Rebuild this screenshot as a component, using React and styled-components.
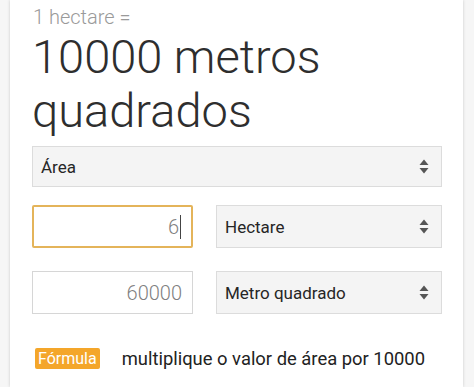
import styled, { createGlobalStyle } from "styled-components";

const Global = createGlobalStyle`
  html, body {
    margin: 0;
    background: #f6f6f6;
    font-family: Roboto, "Liberation Sans", Arial, sans-serif;
  }
`;

const Card = styled.div`
  margin: 0 11px 0 10px;
  min-height: 387px;
  box-sizing: border-box;
  background: #fff;
  box-shadow: 0 0 3px rgba(0, 0, 0, 0.18);
  padding: 5px 21px 0 22px;
`;

const Lead = styled.div`
  font-size: 20px;
  line-height: 24px;
  font-weight: 300;
  color: #9a9a9a;
  padding-left: 1px;
`;

const Result = styled.div`
  font-size: 47px;
  line-height: 54px;
  font-weight: 300;
  color: #2e2e2e;
  margin-top: 1px;
`;

const SelectBox = styled.div`
  display: flex;
  align-items: center;
  justify-content: space-between;
  box-sizing: border-box;
  height: ${(p) => p.h || 42}px;
  flex: ${(p) => (p.grow ? 1 : "none")};
  background: #f4f4f4;
  border: 1px solid #dcdcdc;
  padding: 0 12px 0 8px;
  font-size: 17px;
  color: #262626;
`;

const Arrows = () => (
  <svg width="10" height="15" viewBox="0 0 10 15">
    <path d="M5 0.5 L9.5 6 L0.5 6 Z" fill="#555" />
    <path d="M5 14.5 L9.5 9 L0.5 9 Z" fill="#555" />
  </svg>
);

const Row = styled.div`
  display: flex;
  gap: 23px;
  margin-top: ${(p) => p.top}px;
`;

const Field = styled.div`
  box-sizing: border-box;
  width: 161px;
  height: ${(p) => p.h}px;
  display: flex;
  align-items: center;
  justify-content: flex-end;
  padding-right: 10px;
  border: ${(p) => (p.focused ? "2px solid #e4b45a" : "1px solid #d6d6d6")};
  border-radius: ${(p) => (p.focused ? "2px" : "0")};
  font-size: 20px;
  font-weight: 300;
  color: #808080;
`;

const Caret = styled.span`
  display: inline-block;
  width: 1px;
  height: 24px;
  background: #444;
  margin-left: 1px;
`;

const FormulaRow = styled.div`
  display: flex;
  align-items: center;
  margin-top: 34px;
  padding-left: 3px;
`;

const Badge = styled.span`
  background: #f4a62a;
  color: #fff;
  font-size: 16px;
  line-height: 21px;
  padding: 0 3px;
  border-radius: 2px;
`;

const FormulaText = styled.span`
  margin-left: 22px;
  font-size: 18.4px;
  color: #222;
`;

export default function App() {
  return (
    <>
      <Global />
      <Card>
        <Lead>1 hectare =</Lead>
        <Result>
          10000 metros
          <br />
          quadrados
        </Result>
        <SelectBox h={41} style={{ marginTop: 8 }}>
          <span>Área</span>
          <Arrows />
        </SelectBox>
        <Row top={18}>
          <Field h={43} focused>
            6<Caret />
          </Field>
          <SelectBox h={43} grow>
            <span>Hectare</span>
            <Arrows />
          </SelectBox>
        </Row>
        <Row top={23}>
          <Field h={43}>60000</Field>
          <SelectBox h={43} grow>
            <span>Metro quadrado</span>
            <Arrows />
          </SelectBox>
        </Row>
        <FormulaRow>
          <Badge>Fórmula</Badge>
          <FormulaText>multiplique o valor de área por 10000</FormulaText>
        </FormulaRow>
      </Card>
    </>
  );
}
